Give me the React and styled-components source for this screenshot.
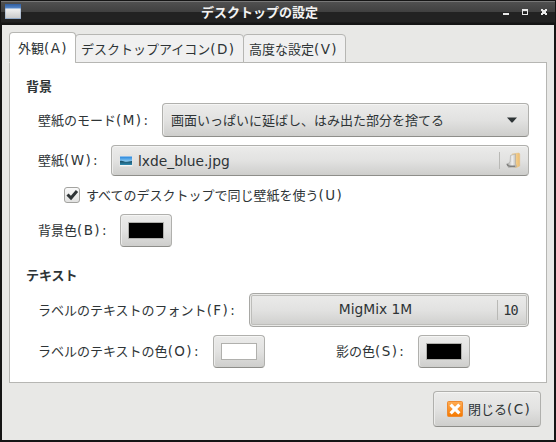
import React, {useState} from 'react'
import styled, {createGlobalStyle} from 'styled-components'

const GlobalStyle = createGlobalStyle`
  * {
    box-sizing: border-box;
  }
  body {
    margin: 0;
    overflow: hidden;
  }
`

const Window = styled.div`
  width: 556px;
  height: 442px;
  display: flex;
  flex-direction: column;
  background: #e8e8e6;
  border: solid #151515;
  border-width: 0 2px 2px;
  color: #2e3436;
  font-family: 'DejaVu Sans', 'Noto Sans CJK JP', sans-serif;
  font-size: 13px;
  line-height: 18px;
  white-space: nowrap;
`

const TitleBar = styled.header`
  height: 25px;
  flex: none;
  margin: 0 -1px;
  padding: 0 8px 1px 4px;
  display: grid;
  grid-template-columns: 50px 1fr 50px;
  align-items: center;
  background: linear-gradient(
    #151515 1px, #777 1px, #777 2px, #505050 2px, #404040 12px,
    #222 12px, #222 22px, #151515 23px
  );
`

const Title = styled.h1`
  margin: 0 33px 0 0;
  color: #f2f2f2;
  font-family: 'Noto Sans CJK JP', sans-serif;
  font-size: 13px;
  font-weight: 700;
  line-height: 22px;
  text-align: center;
`

const WindowButtons = styled.div`
  display: flex;
  justify-content: flex-end;
  gap: 13px;
`

const Tabs = styled.nav`
  height: 38px;
  flex: none;
  padding: 7px 0 0 7px;
  display: flex;
  align-items: flex-end;
  position: relative;
  z-index: 1;
`

const Tab = styled.button`
  width: ${props => props.$width}px;
  height: ${props => props.$active ? 31 : 29}px;
  margin: 0 0 0 ${props => props.$active ? 0 : -1}px;
  padding: 0 0 0 ${props => props.$active ? 8 : 5}px;
  display: flex;
  align-items: center;
  background: ${props => props.$active ? '#fff' : '#f0f0f0'};
  border: 1px solid #b6b6b3;
  border-bottom-color: ${props => props.$active ? '#fff' : '#b6b6b3'};
  border-radius: 4px 4px 0 0;
  color: inherit;
  font: inherit;
`

const Panel = styled.main`
  width: 538px;
  height: 321px;
  flex: none;
  margin: -1px 0 0 7px;
  padding: 14px 17px 0 16px;
  background: #fff;
  border: 1px solid #b6b6b3;
`

const Heading = styled.h2`
  height: 18px;
  margin: 0 0 ${props => props.$gap}px;
  font-family: 'Noto Sans CJK JP', sans-serif;
  font-size: 13px;
  font-weight: 700;
  line-height: 18px;
`

const Row = styled.div`
  height: ${props => props.$height}px;
  margin-bottom: ${props => props.$gap}px;
  padding-left: ${props => props.$indent || 12}px;
  display: flex;
  align-items: center;
`

const Field = styled.div`
  width: ${props => props.$width}px;
  flex: none;
`

const Japanese = styled.span`
  font-family: 'Noto Sans CJK JP', sans-serif;
  font-size: 13px;
  line-height: 18px;
`

const Access = styled.span`
  font-size: 13.5px;
  letter-spacing: 1.4px;
`

const Colon = styled.span`
  margin-left: 1px;
`

const Button = styled.button`
  width: ${props => props.$width ? props.$width + 'px' : 'auto'};
  height: ${props => props.$height}px;
  flex: ${props => props.$width ? 'none' : 1};
  padding: 0 8px;
  display: flex;
  align-items: center;
  background: linear-gradient(#ebebea, #e2e2e1 50%, #cececc);
  border: 1px solid #b0b0ad;
  border-bottom-color: #8e8e8a;
  border-radius: 4px;
  box-shadow: inset 0 1px #f5f5f4, inset 1px 0 #ececeb;
  color: inherit;
  font: inherit;
`

const FontButton = styled(Button)`
  box-shadow: inset 0 0 0 1px #e9e9e7, inset 0 0 0 2px #bdbdba;
  border-color: #a8a8a5;
`

const CloseButton = styled(Button)`
  padding: 0 0 0 13px;
  gap: 5px;
`

const FileButton = styled(Button)`
  padding: 0 7px;
`

const FileName = styled.span`
  margin-left: 5px;
  flex: 1;
  text-align: left;
  font-size: 13.8px;
`

const FontName = styled.span`
  flex: 1;
  padding: 0 4px 2px 0;
  font-size: 13.8px;
  text-align: center;
`

const FontSize = styled.span`
  width: 15px;
  margin: 0 2px 0 5px;
  font-family: 'DejaVu Sans Mono', monospace;
  font-size: 13.5px;
  letter-spacing: -1px;
`

const Divider = styled.i`
  width: 1px;
  height: ${props => props.$height}px;
  margin-right: ${props => props.$gap || 0}px;
  background: #b9b9b6;
`

const Check = styled.button`
  width: 16px;
  height: 16px;
  margin-right: 6px;
  padding: 0;
  display: flex;
  background: linear-gradient(#fafafa, #e2e2e1);
  border: 1px solid #a3a3a0;
  border-radius: 3px;
`

const Arrow = styled.svg`
  margin: 0 3px 0 auto;
`

const Swatch = styled.span`
  width: 36px;
  height: 17px;
  flex: none;
  margin: 0 -1px;
  background: ${props => props.$color};
  border: 1px solid #b0b0ad;
`

const Footer = styled.footer`
  display: flex;
  justify-content: flex-end;
  padding: 8px 13px 0 0;
`

const WindowIcon = () => (
  <svg width="18" height="18" viewBox="0 0 18 18">
    <defs>
      <linearGradient id="windowTop" x2="0" y2="1">
        <stop stopColor="#2f5c9e"/>
        <stop offset="1" stopColor="#5d8fd0"/>
      </linearGradient>
      <linearGradient id="windowBody" x2="0" y2="1">
        <stop stopColor="#f2f2f2"/>
        <stop offset="1" stopColor="#c9c9c9"/>
      </linearGradient>
    </defs>
    <path fill="#7b9cc8" d="M0 1h16v15H0z"/>
    <path fill="url(#windowTop)" d="M0 1h16v5H0z"/>
    <path fill="url(#windowBody)" d="M.4 5.5h15.2v9.8H.4z"/>
  </svg>
)

const PictureIcon = () => (
  <svg width="14" height="14" viewBox="0 0 14 14">
    <defs>
      <linearGradient id="sky" x2="0" y2="1">
        <stop stopColor="#2383dc"/>
        <stop offset="1" stopColor="#a5dcf5"/>
      </linearGradient>
      <linearGradient id="sea" x2="0" y2="1">
        <stop stopColor="#17485f"/>
        <stop offset="1" stopColor="#2f8bb0"/>
      </linearGradient>
    </defs>
    <path fill="#f4f4f4" stroke="#d5d5d3" strokeWidth=".5" d="M.3 1.3h13.4v11.4H.3z"/>
    <path fill="url(#sky)" d="M1 2.5h12v6H1z"/>
    <path fill="url(#sea)" d="M1 7c2-1 4 1 7 .8L13 7v4H1z"/>
  </svg>
)

const FolderIcon = () => (
  <svg width="15" height="17" viewBox="0 0 15 17">
    <defs>
      <linearGradient id="folder">
        <stop stopColor="#f8e0ad"/>
        <stop offset="1" stopColor="#ecbc70"/>
      </linearGradient>
      <linearGradient id="paper">
        <stop stopColor="#9c9c9a"/>
        <stop offset=".55" stopColor="#f0f0f0"/>
        <stop offset="1" stopColor="#b4b4b2"/>
      </linearGradient>
    </defs>
    <path fill="url(#folder)" stroke="#e3bd80" strokeWidth=".5" d="M6 2l7-1 .7 1v12l-3.7 1.7L6 14z"/>
    <path fill="url(#paper)" stroke="#a2a2a0" strokeWidth=".5" d="M4.5 3.5L9.5 2v9.5l1 3-2 1H2.5L1 12.5 4 10z"/>
    <path fill="none" stroke="#80807e" strokeWidth="1.4" d="M1.2 11.8c0 1.8 1.5 2.4 3 2.4h5"/>
  </svg>
)

const CloseIcon = () => (
  <svg width="16" height="16" viewBox="0 0 16 16">
    <defs>
      <linearGradient id="orange" x2="0" y2="1">
        <stop stopColor="#ffad55"/>
        <stop offset="1" stopColor="#f57900"/>
      </linearGradient>
    </defs>
    <rect x=".5" y=".5" width="15" height="15" rx="1" fill="url(#orange)" stroke="#ee8a30"/>
    <path stroke="#fff" strokeWidth="3.2" d="M3.6 3.6l8.8 8.8M12.4 3.6l-8.8 8.8"/>
  </svg>
)

const Text = ({ja, access, colon}) => (
  <>
    <Japanese>{ja}</Japanese>
    {access && <Access>({access}){colon && <Colon>:</Colon>}</Access>}
  </>
)

const ColorButton = ({color}) => (
  <Button $width={52} $height={33}>
    <Swatch $color={color}/>
  </Button>
)

const App = () => {
  const [sameWallpaper, setSameWallpaper] = useState(true)

  return (
    <>
      <GlobalStyle/>
      <Window>
        <TitleBar>
          <WindowIcon/>
          <Title>デスクトップの設定</Title>
          <WindowButtons>
            <svg width="6" height="6" fill="#e8e8e8"><path d="M0 4h6v2H0z"/></svg>
            <svg width="6" height="6" fill="#e8e8e8"><path fillRule="evenodd" d="M0 0h6v6H0zM1 2v3h4V2z"/></svg>
            <svg width="6" height="6" fill="#e8e8e8"><path d="M0 0h2v1h2V0h2v2H5v2h1v2H4V5H2v1H0V4h1V2H0z"/></svg>
          </WindowButtons>
        </TitleBar>

        <Tabs>
          <Tab $active $width={67}><Text ja="外観" access="A"/></Tab>
          <Tab $width={169}><Text ja="デスクトップアイコン" access="D"/></Tab>
          <Tab $width={103}><Text ja="高度な設定" access="V"/></Tab>
        </Tabs>

        <Panel>
          <Heading $gap={8}>背景</Heading>
          <Row $height={34} $gap={8}>
            <Field $width={124}><Text ja="壁紙のモード" access="M" colon/></Field>
            <Button $height={34}>
              <Text ja="画面いっぱいに延ばし、はみ出た部分を捨てる"/>
              <Arrow width="10" height="6">
                <path fill="#2e3436" d="M0 .5h10L5.5 5.5h-1z"/>
              </Arrow>
            </Button>
          </Row>
          <Row $height={31} $gap={8}>
            <Field $width={73}><Text ja="壁紙" access="W" colon/></Field>
            <FileButton $height={31}>
              <PictureIcon/>
              <FileName>lxde_blue.jpg</FileName>
              <Divider $height={17} $gap={6}/>
              <FolderIcon/>
            </FileButton>
          </Row>
          <Row $height={22} $gap={8} $indent={38}>
            <Check onClick={() => setSameWallpaper(!sameWallpaper)}>
              {sameWallpaper && (
                <svg width="14" height="14" viewBox="0 0 14 14">
                  <path fill="none" stroke="#2e3436" strokeWidth="3" d="M2.5 6.5l3.5 3.5 6-7"/>
                </svg>
              )}
            </Check>
            <Text ja="すべてのデスクトップで同じ壁紙を使う" access="U"/>
          </Row>
          <Row $height={33} $gap={19}>
            <Field $width={82}><Text ja="背景色" access="B" colon/></Field>
            <ColorButton color="#000"/>
          </Row>

          <Heading $gap={9}>テキスト</Heading>
          <Row $height={34} $gap={8}>
            <Field $width={211}><Text ja="ラベルのテキストのフォント" access="F" colon/></Field>
            <FontButton $height={34}>
              <FontName>MigMix 1M</FontName>
              <Divider $height={20}/>
              <FontSize>10</FontSize>
            </FontButton>
          </Row>
          <Row $height={33} $gap={0}>
            <Field $width={175}><Text ja="ラベルのテキストの色" access="O" colon/></Field>
            <ColorButton color="#fff"/>
            <Field $width={71}/>
            <Field $width={82}><Text ja="影の色" access="S" colon/></Field>
            <ColorButton color="#000"/>
          </Row>
        </Panel>

        <Footer>
          <CloseButton $width={108} $height={36}>
            <CloseIcon/>
            <span><Text ja="閉じる" access="C"/></span>
          </CloseButton>
        </Footer>
      </Window>
    </>
  )
}

export default App
